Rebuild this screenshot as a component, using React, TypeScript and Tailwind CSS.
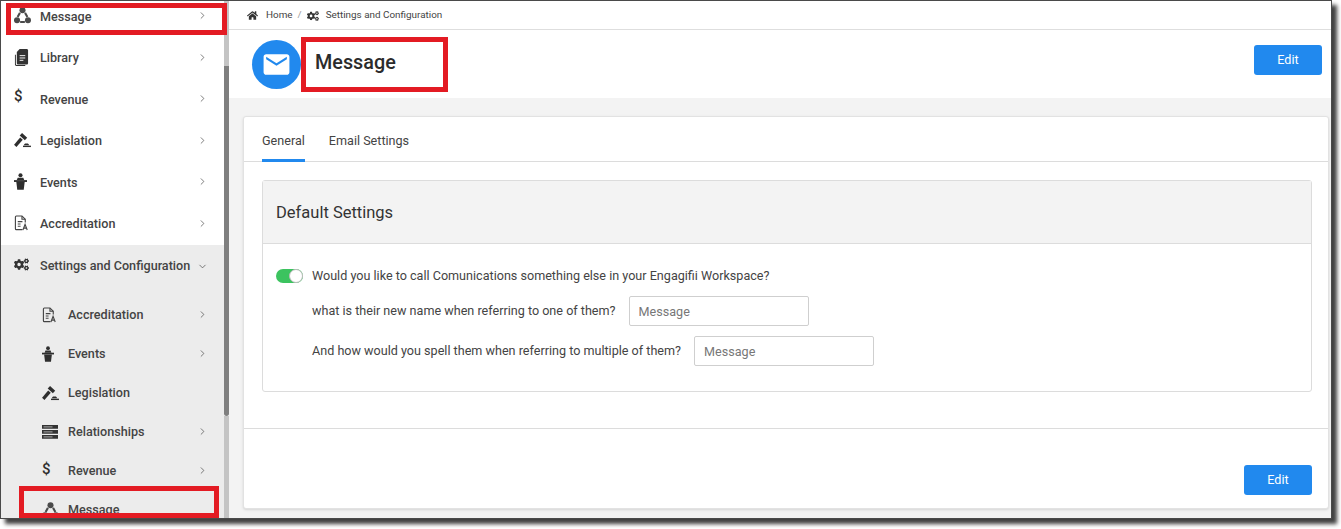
import { ReactNode } from "react";
import { FaCogs, FaHome } from "react-icons/fa";
import { MdEmail } from "react-icons/md";
import { ChevronRight, ChevronDown } from "lucide-react";

function MessageIcon() {
  return (
    <svg viewBox="0 0 18 18" className="w-[17px] h-[17px]" fill="#4a4a4a">
      <circle cx="9" cy="3.400" r="3.200" />
      <circle cx="3.200" cy="14" r="3.200" />
      <circle cx="14.800" cy="14" r="3.200" />
      <path d="M6.300 6.200 3.800 10.500M11.700 6.200l2.500 4.300M6.500 15.800h5" stroke="#4a4a4a" strokeWidth="2.200" fill="none" />
    </svg>
  );
}

function LibraryIcon() {
  return (
    <svg viewBox="0 0 16 18" className="w-[15px] h-[17px]">
      <path d="M2 6H1v10.500c0 .8.7 1.500 1.500 1.500H12v-1H3c-.6 0-1-.4-1-1z" fill="#333" />
      <path d="M6 0h7.500c.8 0 1.500.7 1.500 1.500V15c0 .8-.7 1.500-1.500 1.500h-9C3.700 16.500 3 15.800 3 15V3z" fill="#333" />
      <path d="M6 7h6M6 9.500h6M6 12h4" stroke="#fff" strokeWidth="1" />
    </svg>
  );
}

function GavelIcon() {
  return (
    <svg viewBox="0 0 18 16" className="w-[17px] h-[15px]" fill="#2e2e2e">
      <path d="m8.500 0 5.500 5-2.500 2.700-5.500-5z" />
      <path d="M6.500 4.800 9.300 7.300 2.500 15 0 12.500z" />
      <path d="M10.500 13c.2-1 1-1.700 2-1.700h1.500c1 0 1.800.7 2 1.700z" />
      <path d="M9.500 13.500H18V15H9.500z" />
    </svg>
  );
}

function EventsIcon({ small }: { small?: boolean }) {
  return (
    <svg viewBox="0 0 14 18" className={small ? "w-[12px] h-[16px]" : "w-[13px] h-[17px]"} fill="#2e2e2e">
      <circle cx="7" cy="2.200" r="2.200" />
      <path d="M4 5h6l1 2.500H3z" />
      <path d="M0 7.500h14v2H0z" />
      <path d="M2.500 9.500h9L10.500 18h-7z" />
    </svg>
  );
}

function AccreditationIcon() {
  return (
    <svg viewBox="0 0 16 17" className="w-[15px] h-[16px]" fill="none" stroke="#444" strokeWidth="1.200">
      <path d="M9 15.500H2.500c-.6 0-1-.4-1-1V2c0-.6.4-1 1-1h6L12 4.500V8" />
      <path d="M8.500 1v3.500H12" />
      <path d="M4 7h5M4 9.500h3M4 12h3" />
      <path d="m9.500 16 2.300-6 2.300 6M10.300 14h3" />
    </svg>
  );
}

function ServerIcon() {
  return (
    <svg viewBox="0 0 16 14" className="w-[16px] h-[14px]">
      <path d="M0 0h16v3.800H0zM0 5h16v3.800H0zM0 10h16v3.800H0z" fill="#333" />
      <path d="M1.500 1.900h9M1.500 6.900h9M1.500 11.900h9" stroke="#aaa" strokeWidth="1" />
    </svg>
  );
}

function DollarIcon() {
  return <span className="text-[15px] leading-none font-medium text-[#2e2e2e] -mt-[4px]">$</span>;
}

function RowLink({
  icon,
  label,
  chevron = true,
  open = false,
  nested = false,
}: {
  icon: ReactNode;
  label: string;
  chevron?: boolean;
  open?: boolean;
  nested?: boolean;
}) {
  return (
    <div className={nested ? "flex items-center h-[39px] pl-[41px] pr-[16px]" : "flex items-center h-[41.5px] pl-[13px] pr-[16px]"}>
      <span className={nested ? "w-[26px] flex justify-start -mt-px" : "w-[26px] flex justify-start -mt-[3px]"}>{icon}</span>
      <span className="flex-1 text-[12.6px] font-medium text-[#444] whitespace-nowrap">{label}</span>
      {chevron &&
        (open ? (
          <ChevronDown size={11} strokeWidth={1.500} className="text-[#444]" />
        ) : (
          <ChevronRight size={11} strokeWidth={1.500} className="text-[#444] -mt-[3px]" />
        ))}
    </div>
  );
}

function Sidebar() {
  return (
    <div className="w-[228px] flex shrink-0 relative">
      <div className="w-[223px] overflow-hidden">
        <div className="-mt-[4.4px]">
          <RowLink icon={<MessageIcon />} label="Message" />
          <RowLink icon={<LibraryIcon />} label="Library" />
          <RowLink icon={<DollarIcon />} label="Revenue" />
          <RowLink icon={<GavelIcon />} label="Legislation" />
          <RowLink icon={<EventsIcon />} label="Events" />
          <RowLink icon={<AccreditationIcon />} label="Accreditation" />
          <div className="bg-[#ececec] pb-6 -mt-px pt-px">
            <RowLink icon={<FaCogs size={15} color="#333" />} label="Settings and Configuration" open />
            <div className="pt-[9px]">
              <RowLink nested icon={<AccreditationIcon />} label="Accreditation" />
              <RowLink nested icon={<EventsIcon small />} label="Events" />
              <RowLink nested icon={<GavelIcon />} label="Legislation" chevron={false} />
              <RowLink nested icon={<ServerIcon />} label="Relationships" />
              <RowLink nested icon={<DollarIcon />} label="Revenue" />
              <RowLink nested icon={<MessageIcon />} label="Message" chevron={false} />
            </div>
          </div>
        </div>
      </div>
      <div className="w-[5px] flex flex-col">
        <div className="h-[65px] bg-[#c4c4c4]" />
        <div className="h-[350px] bg-[#7f7f7f] rounded-b-sm" />
        <div className="flex-1 bg-[#c4c4c4]" />
      </div>
    </div>
  );
}

function EditButton() {
  return (
    <button type="button" className="w-[68px] h-[30px] pt-px rounded-[3px] bg-[#2189ee] text-white text-[12.6px]">
      Edit
    </button>
  );
}

function Main() {
  return (
    <div className="flex-1 flex flex-col min-w-0 bg-[#f3f3f3]">
      <div className="h-[29px] shrink-0 pt-px bg-white border-b border-[#dedede] flex items-center pl-[18px] text-[9.9px] text-[#444]">
        <FaHome size={11} color="#333" />
        <span className="ml-2">Home</span>
        <span className="mx-[5px] text-[#999]">/</span>
        <FaCogs size={12} color="#333" />
        <span className="ml-[7px]">Settings and Configuration</span>
      </div>
      <div className="h-[68px] shrink-0 bg-white flex items-center pl-[23px] pr-[9px]">
        <div className="w-[49px] h-[49px] rounded-full bg-[#2189ee] flex items-center justify-center">
          <MdEmail size={31} color="#fff" />
        </div>
        <h1 className="ml-[14px] flex-1 text-[19.8px] font-medium text-[#2b2b2b] -mt-[3px]">Message</h1>
        <div className="-mt-[9px]">
          <EditButton />
        </div>
      </div>
      <div className="flex-1 pt-[18px] pl-[14px] pr-[2px] pb-[9px] flex">
        <div className="flex-1 bg-white rounded-[3px] border border-[#e2e2e2] shadow-sm flex flex-col">
          <div className="h-[45px] shrink-0 border-b border-[#dcdcdc] flex items-end pl-[18px] gap-[24px] text-[12.6px] text-[#444]">
            <div className="h-[45px] flex items-center border-b-[3px] border-[#2189ee] -mb-px pt-[7px]">General</div>
            <div className="h-[45px] flex items-center -mb-px pt-[3px]">Email Settings</div>
          </div>
          <div className="pt-[18px] pl-[18px] pr-[16px] pb-[36px] border-b border-[#dcdcdc]">
            <div className="rounded-[3px] border border-[#dcdcdc]">
              <div className="h-[63px] pt-[2px] bg-[#f3f3f3] border-b border-[#dcdcdc] flex items-center pl-[13px] text-[16.5px] text-[#333]">
                Default Settings
              </div>
              <div className="pl-[13px] h-[147px] pt-[24px] text-[12.6px] text-[#444]">
                <div className="flex items-center h-[16px]">
                  <div className="w-[27px] h-[14px] rounded-full bg-[#3cc35f] flex justify-end">
                    <div className="w-[14px] h-[14px] rounded-full bg-white border border-[#bbb]" />
                  </div>
                  <span className="ml-[9px]">Would you like to call Comunications something else in your Engagifii Workspace?</span>
                </div>
                <div className="flex items-center pl-[36px] mt-[12px]">
                  <span>what is their new name when referring to one of them?</span>
                  <input
                    placeholder="Message"
                    className="ml-[13px] w-[180px] h-[30px] px-[9px] border border-[#cfcfcf] rounded-[2px] bg-white placeholder:text-[#777] outline-none"
                  />
                </div>
                <div className="flex items-center pl-[36px] mt-[10px]">
                  <span>And how would you spell them when referring to multiple of them?</span>
                  <input
                    placeholder="Message"
                    className="ml-[13px] w-[180px] h-[30px] px-[9px] border border-[#cfcfcf] rounded-[2px] bg-white placeholder:text-[#777] outline-none"
                  />
                </div>
              </div>
            </div>
          </div>
          <div className="flex-1 flex justify-end items-start pt-[36px] pr-[16px]">
            <EditButton />
          </div>
        </div>
      </div>
    </div>
  );
}

export default function App() {
  return (
    <div className="w-[1341px] h-[529px] bg-white overflow-hidden relative font-['Roboto',sans-serif]">
      <div className="w-[1332px] h-[519px] border border-[#4a4a4a] bg-white flex overflow-hidden shadow-[5px_5px_4px_rgba(0,0,0,0.75)]">
        <Sidebar />
        <Main />
      </div>
      {/* red callouts drawn over the screenshot */}
      <div className="absolute left-[6px] top-[3px] w-[221px] h-[32px] border-[5px] border-[#e31b23]" />
      <div className="absolute left-[301px] top-[37px] w-[147px] h-[55px] border-[5px] border-[#e31b23]" />
      <div className="absolute left-[19px] top-[486px] w-[200px] h-[32px] border-[5px] border-[#e31b23]" />
    </div>
  );
}
